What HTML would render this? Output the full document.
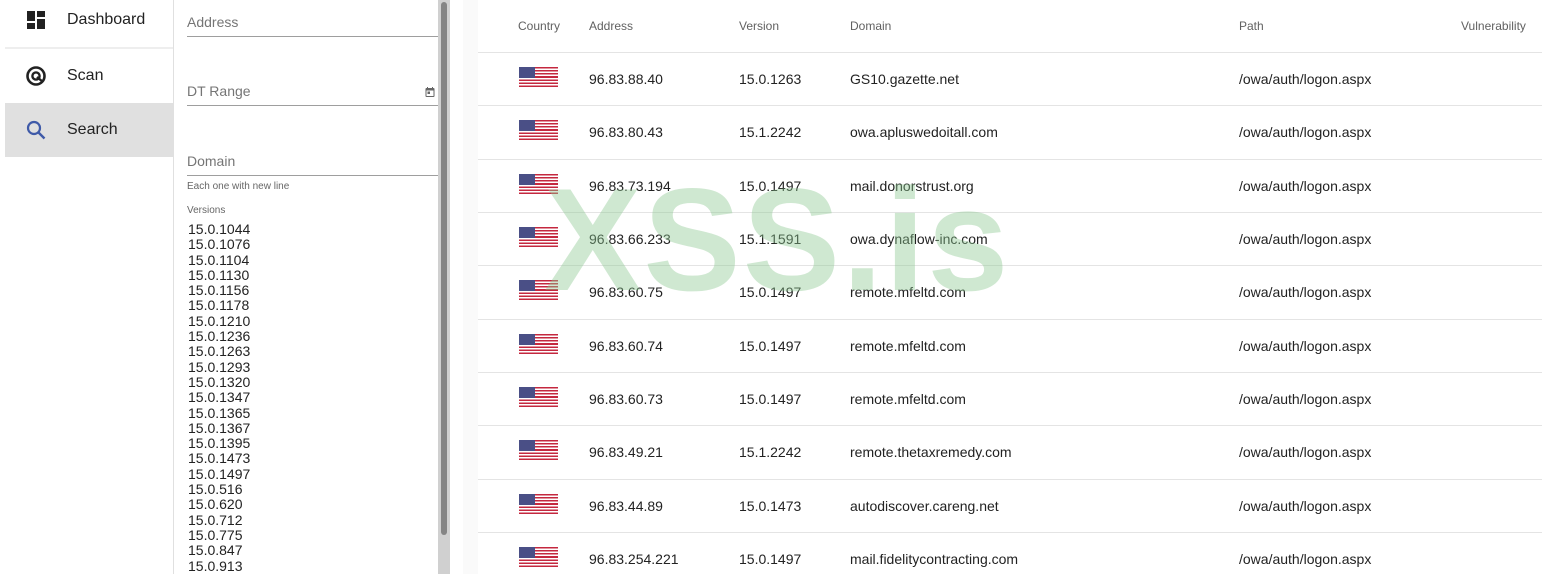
<!DOCTYPE html>
<html><head><meta charset="utf-8"><style>
*{box-sizing:border-box;margin:0;padding:0}
body{width:1542px;height:574px;overflow:hidden;background:#fff;font-family:"Liberation Sans",sans-serif;position:relative;color:#212121}
.nav{position:absolute;left:0;top:0;width:174px;height:574px;border-right:1px solid #e0e0e0}
.nav .it{position:absolute;left:5px;width:168px;height:54px;font-size:16px;color:#222}
.nav .it span{position:absolute;left:62px;top:50%;transform:translateY(-50%)}
.nav .it svg{position:absolute;left:19px;top:50%;transform:translateY(-50%)}
.filt{position:absolute;left:174px;top:0;width:276px;height:574px}
.fld{position:absolute;left:13px;width:251px;border-bottom:1px solid #9e9e9e;font-size:14px;color:#757575;padding-bottom:6px}
.small{position:absolute;left:13px;font-size:10px;color:#666}
.vers{position:absolute;left:14px;top:222px;font-size:14px;line-height:15.3px;color:#222}
.track{position:absolute;left:438px;top:0;width:12px;height:574px;background:#d0d0d0}
.thumb{position:absolute;left:441px;top:2px;width:6px;height:533px;background:#858585;border-radius:3px}
.gap{position:absolute;left:463px;top:0;width:15px;height:574px;background:#fafafa}
.tbl{position:absolute;left:478px;top:0;width:1064px;height:574px;background:#fff}
.h{position:absolute;top:19px;font-size:12px;color:#616161}
.row{position:absolute;left:0;width:1064px;height:53px;border-top:1px solid #e4e4e4;font-size:14px;color:#222}
.row div{position:absolute;top:18px}
.flag{position:absolute;left:41px!important;top:14px!important;width:39px;height:20px;background:repeating-linear-gradient(#c4283f 0 1.54px,#fff 1.54px 3.08px)}
.flag:before{content:"";position:absolute;left:0;top:0;width:16px;height:11px;background:#4a4f86}
.wm{position:absolute;left:544px;top:167px;font-size:146px;font-weight:bold;color:rgba(140,200,145,0.42);letter-spacing:2px;line-height:1}
</style></head><body>
<div class="nav">
 <div class="it" style="top:-7px"><svg width="24" height="24" viewBox="0 0 24 24"><path fill="#222" d="M3 13h8V3H3zm0 8h8v-6H3zm10 0h8V11h-8zm0-18v6h8V3z"/></svg><span>Dashboard</span></div>
 <div style="position:absolute;left:5px;top:47px;width:168px;height:2px;background:#eee"></div>
 <div class="it" style="top:49px"><svg width="24" height="24" viewBox="0 0 24 24"><circle cx="12" cy="12" r="8.5" fill="none" stroke="#222" stroke-width="2.6"/><circle cx="12" cy="12" r="3.6" fill="none" stroke="#222" stroke-width="2.4"/><path d="M13 13l6 5" stroke="#222" stroke-width="2.4"/></svg><span>Scan</span></div>
 <div class="it" style="top:103px;background:#e0e0e0"><svg width="24" height="24" viewBox="0 0 24 24"><circle cx="10" cy="10" r="6" fill="none" stroke="#3f5aa8" stroke-width="2.2"/><path d="M14.5 14.5l6 6" stroke="#3f5aa8" stroke-width="2.4"/></svg><span>Search</span></div>
</div>
<div class="filt">
 <div class="fld" style="top:14px">Address</div>
 <div class="fld" style="top:83px">DT Range<svg style="position:absolute;right:2px;top:3px" width="12" height="12" viewBox="0 0 24 24"><path fill="#666" d="M19 4h-1V2h-2v2H8V2H6v2H5a2 2 0 0 0-2 2v14a2 2 0 0 0 2 2h14a2 2 0 0 0 2-2V6a2 2 0 0 0-2-2zm0 16H5V9h14zM7 11h5v5H7z"/></svg></div>
 <div class="fld" style="top:153px">Domain</div>
 <div class="small" style="top:181px">Each one with new line</div>
 <div class="small" style="top:205px">Versions</div>
 <div class="vers">15.0.1044<br>15.0.1076<br>15.0.1104<br>15.0.1130<br>15.0.1156<br>15.0.1178<br>15.0.1210<br>15.0.1236<br>15.0.1263<br>15.0.1293<br>15.0.1320<br>15.0.1347<br>15.0.1365<br>15.0.1367<br>15.0.1395<br>15.0.1473<br>15.0.1497<br>15.0.516<br>15.0.620<br>15.0.712<br>15.0.775<br>15.0.847<br>15.0.913</div>
</div>
<div class="track"></div><div class="thumb"></div>
<div class="gap"></div>
<div class="tbl">
 <div class="h" style="left:40px">Country</div><div class="h" style="left:111px">Address</div><div class="h" style="left:261px">Version</div><div class="h" style="left:372px">Domain</div><div class="h" style="left:761px">Path</div><div class="h" style="left:983px">Vulnerability</div>
 <div class="row" style="top:52px"><div class="flag"></div><div style="left:111px">96.83.88.40</div><div style="left:261px">15.0.1263</div><div style="left:372px">GS10.gazette.net</div><div style="left:761px">/owa/auth/logon.aspx</div></div>
 <div class="row" style="top:105px"><div class="flag"></div><div style="left:111px">96.83.80.43</div><div style="left:261px">15.1.2242</div><div style="left:372px">owa.apluswedoitall.com</div><div style="left:761px">/owa/auth/logon.aspx</div></div>
 <div class="row" style="top:159px"><div class="flag"></div><div style="left:111px">96.83.73.194</div><div style="left:261px">15.0.1497</div><div style="left:372px">mail.donorstrust.org</div><div style="left:761px">/owa/auth/logon.aspx</div></div>
 <div class="row" style="top:212px"><div class="flag"></div><div style="left:111px">96.83.66.233</div><div style="left:261px">15.1.1591</div><div style="left:372px">owa.dynaflow-inc.com</div><div style="left:761px">/owa/auth/logon.aspx</div></div>
 <div class="row" style="top:265px"><div class="flag"></div><div style="left:111px">96.83.60.75</div><div style="left:261px">15.0.1497</div><div style="left:372px">remote.mfeltd.com</div><div style="left:761px">/owa/auth/logon.aspx</div></div>
 <div class="row" style="top:319px"><div class="flag"></div><div style="left:111px">96.83.60.74</div><div style="left:261px">15.0.1497</div><div style="left:372px">remote.mfeltd.com</div><div style="left:761px">/owa/auth/logon.aspx</div></div>
 <div class="row" style="top:372px"><div class="flag"></div><div style="left:111px">96.83.60.73</div><div style="left:261px">15.0.1497</div><div style="left:372px">remote.mfeltd.com</div><div style="left:761px">/owa/auth/logon.aspx</div></div>
 <div class="row" style="top:425px"><div class="flag"></div><div style="left:111px">96.83.49.21</div><div style="left:261px">15.1.2242</div><div style="left:372px">remote.thetaxremedy.com</div><div style="left:761px">/owa/auth/logon.aspx</div></div>
 <div class="row" style="top:479px"><div class="flag"></div><div style="left:111px">96.83.44.89</div><div style="left:261px">15.0.1473</div><div style="left:372px">autodiscover.careng.net</div><div style="left:761px">/owa/auth/logon.aspx</div></div>
 <div class="row" style="top:532px"><div class="flag"></div><div style="left:111px">96.83.254.221</div><div style="left:261px">15.0.1497</div><div style="left:372px">mail.fidelitycontracting.com</div><div style="left:761px">/owa/auth/logon.aspx</div></div>
</div>
<div class="wm">XSS.is</div>
</body></html>
